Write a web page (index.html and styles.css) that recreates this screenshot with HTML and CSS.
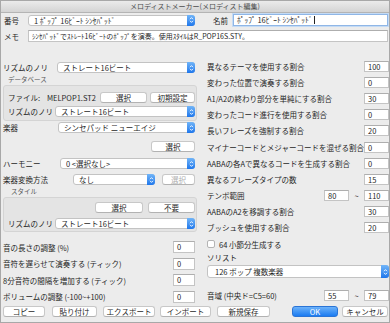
FILE: index.html
```html
<!DOCTYPE html>
<html lang="ja">
<head>
  <meta charset="UTF-8">
  <title>メロディストメーカー</title>
  <link rel="stylesheet" href="styles.css">
</head>
<body>
<div class="win">
  <div class="titlebar">メロディストメーカー(メロディスト編集)</div>

  <div class="head">
    <div class="row hrow">
      <span class="lbl lbl-no">番号</span>
      <div class="sel sel-no"><span class="txt">1 ﾎﾟｯﾌﾟ 16ﾋﾞｰﾄ ｼﾝｾﾊﾟｯﾄﾞ</span><span class="step"><svg width="5" height="8" viewBox="0 0 5 8"><path d="M1 3.2L2.5 1.6L4 3.2M1 4.8L2.5 6.4L4 4.8" fill="none" stroke="#fff" stroke-width="0.9"/></svg></span></div>
      <span class="lbl lbl-name">名前</span>
      <div class="field grow focus">ﾎﾟｯﾌﾟ 16ﾋﾞｰﾄ ｼﾝｾﾊﾟｯﾄﾞ<span class="caret"></span></div>
    </div>
    <div class="row hrow memo">
      <span class="lbl lbl-no">メモ</span>
      <div class="field grow memo-text">ｼﾝｾﾊﾟｯﾄﾞでｽﾄﾚｰﾄ16ﾋﾞｰﾄのﾎﾟｯﾌﾟを演奏。使用ｽﾀｲﾙはR_POP16S.STY。</div>
    </div>
  </div>

  <div class="main">
    <!-- left side -->
    <div class="left">
      <div class="row ctl first">
        <span class="lbl w54">リズムのノリ</span>
        <div class="sel grow"><span class="txt">ストレート16ビート</span><span class="step"><svg width="5" height="8" viewBox="0 0 5 8"><path d="M1 3.2L2.5 1.6L4 3.2M1 4.8L2.5 6.4L4 4.8" fill="none" stroke="#fff" stroke-width="0.9"/></svg></span></div>
      </div>
      <div class="cap">データベース</div>
      <div class="group g1">
        <div class="row ctl">
          <span class="lbl w39">ファイル:</span>
          <span class="lbl w53">MELPOP1.ST2</span>
          <div class="btn w47">選択</div>
          <div class="btn grow ml3">初期設定</div>
        </div>
        <div class="row ctl gap3">
          <span class="lbl w47">リズムのノリ</span>
          <div class="sel grow"><span class="txt">ストレート16ビート</span><span class="step"><svg width="5" height="8" viewBox="0 0 5 8"><path d="M1 3.2L2.5 1.6L4 3.2M1 4.8L2.5 6.4L4 4.8" fill="none" stroke="#fff" stroke-width="0.9"/></svg></span></div>
        </div>
      </div>
      <div class="row ctl inst">
        <span class="lbl w55">楽器</span>
        <div class="sel grow"><span class="txt">シンセパッド ニューエイジ</span><span class="step"><svg width="5" height="8" viewBox="0 0 5 8"><path d="M1 3.2L2.5 1.6L4 3.2M1 4.8L2.5 6.4L4 4.8" fill="none" stroke="#fff" stroke-width="0.9"/></svg></span></div>
      </div>
      <div class="row ctl end pick">
        <div class="btn w44">選択</div>
      </div>
      <div class="row ctl harm">
        <span class="lbl w57">ハーモニー</span>
        <div class="sel grow"><span class="txt">0 &lt;選択なし&gt;</span><span class="step"><svg width="5" height="8" viewBox="0 0 5 8"><path d="M1 3.2L2.5 1.6L4 3.2M1 4.8L2.5 6.4L4 4.8" fill="none" stroke="#fff" stroke-width="0.9"/></svg></span></div>
      </div>
      <div class="row ctl conv">
        <span class="lbl w70">楽器変換方法</span>
        <div class="sel w82"><span class="txt">なし</span><span class="step"><svg width="5" height="8" viewBox="0 0 5 8"><path d="M1 3.2L2.5 1.6L4 3.2M1 4.8L2.5 6.4L4 4.8" fill="none" stroke="#fff" stroke-width="0.9"/></svg></span></div>
        <div class="btn grow ml7 off">選択</div>
      </div>
      <div class="cap cap-style">スタイル</div>
      <div class="group g2">
        <div class="row ctl end">
          <div class="btn w48">選択</div>
          <div class="btn w47 ml5">不要</div>
        </div>
        <div class="row ctl gap5">
          <span class="lbl w47">リズムのノリ</span>
          <div class="sel grow"><span class="txt">ストレート16ビート</span><span class="step"><svg width="5" height="8" viewBox="0 0 5 8"><path d="M1 3.2L2.5 1.6L4 3.2M1 4.8L2.5 6.4L4 4.8" fill="none" stroke="#fff" stroke-width="0.9"/></svg></span></div>
        </div>
      </div>
      <div class="nums">
        <div class="row num"><span class="lbl grow">音の長さの調整 (%)</span><div class="field w22">0</div></div>
        <div class="row num"><span class="lbl grow">音符を遅らせて演奏する (ティック)</span><div class="field w22">0</div></div>
        <div class="row num"><span class="lbl grow">8分音符の間隔を増加する (ティック)</span><div class="field w22">0</div></div>
        <div class="row num"><span class="lbl grow">ボリュームの調整 (-100~+100)</span><div class="field w22">0</div></div>
      </div>
    </div>

    <!-- right side -->
    <div class="right">
      <div class="row rr"><span class="lbl grow">異なるテーマを使用する割合</span><div class="field w25">100</div></div>
      <div class="row rr"><span class="lbl grow">変わった位置で演奏する割合</span><div class="field w25">0</div></div>
      <div class="row rr"><span class="lbl grow">A1/A2の終わり部分を単純にする割合</span><div class="field w25">30</div></div>
      <div class="row rr"><span class="lbl grow">変わったコード進行を使用する割合</span><div class="field w25">0</div></div>
      <div class="row rr"><span class="lbl grow">長いフレーズを強制する割合</span><div class="field w25">20</div></div>
      <div class="row rr"><span class="lbl grow">マイナーコードとメジャーコードを混ぜる割合</span><div class="field w25">0</div></div>
      <div class="row rr"><span class="lbl grow">AABAの各Aで異なるコードを生成する割合</span><div class="field w25">0</div></div>
      <div class="row rr"><span class="lbl grow">異なるフレーズタイプの数</span><div class="field w25">15</div></div>
      <div class="row rr"><span class="lbl grow">テンポ範囲</span><div class="field w25">80</div><span class="tilde">~</span><div class="field w25">110</div></div>
      <div class="row rr"><span class="lbl grow">AABAのA2を移調する割合</span><div class="field w25">30</div></div>
      <div class="row rr"><span class="lbl grow">ブッシュを使用する割合</span><div class="field w25">20</div></div>
      <div class="row rr"><span class="check"></span><span class="lbl">64 小節分生成する</span></div>
      <div class="lbl soloist">ソリスト</div>
      <div class="sel sel-solo"><span class="txt">126 ポップ 複数楽器</span><span class="step"><svg width="5" height="8" viewBox="0 0 5 8"><path d="M1 3.2L2.5 1.6L4 3.2M1 4.8L2.5 6.4L4 4.8" fill="none" stroke="#fff" stroke-width="0.9"/></svg></span></div>
      <div class="row rr range"><span class="lbl grow">音域 (中央ド=C5=60)</span><div class="field w25">55</div><span class="tilde">~</span><div class="field w25">79</div></div>
    </div>
  </div>

  <div class="foot">
    <div class="btn fb1">コピー</div>
    <div class="btn fb2">貼り付け</div>
    <div class="btn fb3">エクスポート</div>
    <div class="btn fb4">インポート</div>
    <div class="btn fb5">新規保存</div>
    <div class="btn ok">OK</div>
    <div class="btn fb7">キャンセル</div>
  </div>
</div>
</body>
</html>
```

FILE: styles.css
```css
* {
  box-sizing: border-box;
}
body {
  margin: 0;
  background: #fff;
  font-family: "Noto Sans CJK JP", "Noto Sans", sans-serif;
  font-size: 7.5px;
  color: #1f1f1f;
}
.win {
  width: 390px;
  height: 323px;
  background: #ececec;
  border: 1px solid #a8a8a8;
  overflow: hidden;
}
.titlebar {
  height: 12px;
  line-height: 11px;
  text-align: center;
  font-size: 7px;
  color: #4d4d4d;
  background: linear-gradient(#ebebeb, #d4d4d4);
  border-bottom: 1px solid #b4b4b4;
}
.row {
  display: flex;
  align-items: center;
}
.grow {
  flex: 1;
}
.lbl {
  white-space: nowrap;
  flex-shrink: 0;
}
.lbl.grow {
  flex: 1;
}

/* header */
.head {
  padding: 1px 1px 0 3px;
}
.hrow {
  height: 12px;
}
.memo {
  margin-top: 4px;
}
.memo-text {
  font-size: 7px;
}
.lbl-no {
  width: 24px;
}
.lbl-name {
  width: 20px;
  margin-left: 18px;
}
.sel-no {
  width: 167px;
  height: 12px;
}

/* controls */
.sel {
  display: flex;
  align-items: center;
  height: 11px;
  background: #fff;
  border: 1px solid #c3c3c3;
  border-radius: 3px;
  padding-left: 5px;
}
.sel .txt {
  flex: 1;
  white-space: nowrap;
  overflow: hidden;
  line-height: 9px;
}
.step {
  display: flex;
  align-items: center;
  justify-content: center;
  width: 8px;
  align-self: stretch;
  margin: -1px -1px -1px 0;
  border-radius: 0 3px 3px 0;
  background: linear-gradient(#71b5f8, #1f77ec);
}
.field {
  height: 12px;
  line-height: 10px;
  background: #fff;
  border: 1px solid #c4c4c4;
  border-top-color: #aeaeae;
  padding-left: 3px;
  white-space: nowrap;
  overflow: hidden;
}
.field.focus {
  border-color: #8fb6e6;
  box-shadow: 0 0 0 1px #c4dbf5;
}
.caret {
  display: inline-block;
  width: 1px;
  height: 8px;
  margin-left: 2px;
  vertical-align: -1px;
  background: #222;
}
.btn {
  height: 11px;
  line-height: 9px;
  text-align: center;
  background: #fff;
  border: 1px solid #c8c8c8;
  border-bottom-color: #b2b2b2;
  border-radius: 3px;
  white-space: nowrap;
}
.btn.off {
  color: #b0b0b0;
}
.w22 { width: 22px; }
.w25 { width: 25px; }
.w39 { width: 39px; }
.w44 { width: 44px; }
.w47 { width: 47px; }
.w48 { width: 48px; }
.w53 { width: 53px; }
.w54 { width: 54px; }
.w55 { width: 55px; }
.w57 { width: 57px; }
.w70 { width: 70px; }
.w82 { width: 82px; }
.ml3 { margin-left: 3px; }
.ml5 { margin-left: 5px; }
.ml7 { margin-left: 7px; }
.end {
  justify-content: flex-end;
}

/* main area */
.main {
  display: flex;
  height: 263px;
  padding-left: 2px;
}
.left {
  width: 194px;
}
.left > .row {
  padding-right: 2px;
}
.ctl {
  height: 11px;
}
.first {
  margin-top: 20px;
}
.cap {
  height: 11px;
  line-height: 11px;
  margin-top: 1px;
  padding-left: 5px;
  font-size: 6.5px;
  color: #555;
}
.cap-style {
  padding-left: 8px;
}
.group {
  background: #e4e4e4;
  border: 1px solid #d4d4d4;
  border-radius: 3px;
  padding: 6px 1px 3px 4px;
}
.g2 {
  padding-top: 4px;
  padding-bottom: 2px;
}
.gap3 { margin-top: 3px; }
.gap5 { margin-top: 5px; }
.inst { margin-top: 1px; }
.pick { margin-top: 8px; }
.harm { margin-top: 6px; }
.conv { margin-top: 5px; }
.nums {
  margin-top: 9px;
  padding-right: 2px;
}
.num {
  height: 12px;
  margin-bottom: 4.6px;
}
.num .field {
  padding-left: 3px;
}

.right {
  width: 182px;
  margin-left: 10px;
  padding-top: 16px;
}
.rr {
  height: 16.2px;
}
.rr .field {
  height: 11px;
  line-height: 9px;
}
.tilde {
  width: 15px;
  text-align: center;
}
.check {
  width: 8px;
  height: 8px;
  background: #fff;
  border: 1px solid #b4b4b4;
  border-radius: 2px;
  margin-right: 4px;
}
.soloist {
  height: 12px;
  line-height: 12px;
}
.sel-solo {
  height: 13px;
  margin-top: 1px;
  padding-left: 7px;
}
.range {
  height: 16px;
  margin-top: 9px;
}

/* bottom buttons */
.foot {
  display: flex;
  padding: 1px 0 0 2px;
}
.fb1 { width: 42px; }
.fb2 { width: 45px; margin-left: 7px; }
.fb3 { width: 52px; margin-left: 6px; }
.fb4 { width: 51px; margin-left: 5px; }
.fb5 { width: 53px; margin-left: 6px; }
.ok {
  width: 46px;
  margin-left: 22px;
  color: #fff;
  background: linear-gradient(#6cb2fa, #1b7bf1);
  border-color: #2a74d6;
}
.fb7 { width: 46px; margin-left: 4px; }
```
